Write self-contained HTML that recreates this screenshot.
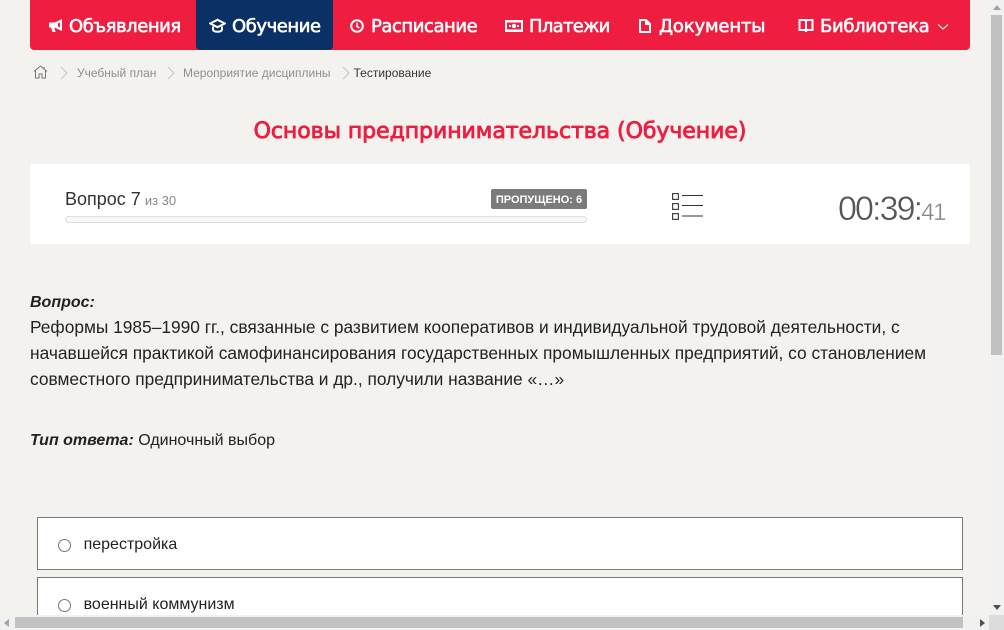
<!DOCTYPE html>
<html lang="ru"><head><meta charset="utf-8"><title>Тестирование</title>
<style>
html,body{margin:0;padding:0;width:1004px;height:630px;overflow:hidden;background:#f3f2ef;font-family:"Liberation Sans",sans-serif;color:#222}
#w{position:relative;width:1004px;height:630px;overflow:hidden}
.a{position:absolute;white-space:nowrap}
#nav{left:30px;top:0;width:940px;height:50px;background:#ef1d3f;border-radius:0 0 4px 4px}
#act{left:196px;top:0;width:137px;height:50px;background:#0a3066;border-radius:0 0 4px 4px}
.n{top:14px;line-height:26px;font-size:18px;font-family:"DejaVu Sans",sans-serif;font-weight:400;color:#fff;-webkit-text-stroke:.6px #fff;letter-spacing:-.45px}
.b{top:65px;line-height:16px;font-size:12px;color:#8f8f8f}
svg{position:absolute;display:block}
.q{left:30px;font-size:17.34px;line-height:26px;color:#222}
.opt{left:37px;width:924px;background:#fff;border:1px solid #7b7b7b}
.r{left:58px;width:11px;height:11px;border:1px solid #777;border-radius:50%;background:#fff}
.t{left:83.6px;font-size:16px;line-height:20px;color:#222}
</style></head><body><div id="w">
<div class="a" id="nav"></div><div class="a" id="act"></div>

<svg style="left:48px;top:18px" width="15" height="15" viewBox="0 0 15 15"><path d="M14 1 7 4.500H1V9.500H3L4.500 14H7.500L6.500 9.500 14 13ZM10 5.500 12 4.500V9.500L10 8.500Z" fill="#fff" fill-rule="evenodd"/></svg>
<div class="a n" style="left:69px">Объявления</div>
<svg style="left:209px;top:18px" width="17" height="16" viewBox="0 0 17 16"><path d="M8.500 1.800 15.800 5.500 8.500 9.200 1.200 5.500Z" fill="none" stroke="#fff" stroke-width="2"/><path d="M4 8.500V11.500C4 14.500 13 14.500 13 11.500V8.500" fill="none" stroke="#fff" stroke-width="2"/></svg>
<div class="a n" style="left:232px">Обучение</div>
<svg style="left:350px;top:19px" width="14" height="14" viewBox="0 0 14 14"><circle cx="7" cy="7" r="5.800" fill="none" stroke="#fff" stroke-width="2"/><path d="M7 3.800V7.400L9.300 9" fill="none" stroke="#fff" stroke-width="1.500"/></svg>
<div class="a n" style="left:371px">Расписание</div>
<svg style="left:505px;top:20px" width="18" height="12" viewBox="0 0 18 12"><path d="M0 0H18V12H0ZM2 2.500V9.500H16V2.500Z" fill="#fff" fill-rule="evenodd"/><circle cx="9" cy="6" r="2.200" fill="#fff"/><rect x="4" y="5" width="2" height="2" fill="#fff"/><rect x="12" y="5" width="2" height="2" fill="#fff"/></svg>
<div class="a n" style="left:529px;letter-spacing:-.7px">Платежи</div>
<svg style="left:639px;top:19px" width="12" height="14" viewBox="0 0 12 14"><path d="M0 0H7.500L12 4.500V14H0ZM2 2V12H10V6H6V2Z" fill="#fff" fill-rule="evenodd"/></svg>
<div class="a n" style="left:659px;letter-spacing:-.15px">Документы</div>
<svg style="left:798px;top:19px" width="16" height="14" viewBox="0 0 16 14"><path d="M1.500 1H6.500C7.500 1 8 1.500 8 2.500V13C8 12 7.500 11 6.500 11H1.500ZM14.500 1H9.500C8.500 1 8 1.500 8 2.500V13C8 12 8.500 11 9.500 11H14.500Z" fill="none" stroke="#fff" stroke-width="2"/></svg>
<div class="a n" style="left:820px;letter-spacing:-.35px">Библиотека</div>
<svg style="left:937px;top:23px" width="12" height="8" viewBox="0 0 12 8"><path d="M1 1.500 6 6 11 1.500" fill="none" stroke="#fff" stroke-width="1.100"/></svg>

<svg style="left:33px;top:65px" width="15" height="14" viewBox="0 0 15 14"><path d="M1 6.500 7.500 1 14 6.500M2.500 5.500V13H6V9H9V13H12.500V5.500M11 2V4" fill="none" stroke="#777" stroke-width="1"/></svg>
<svg style="left:60px;top:66px" width="8" height="14" viewBox="0 0 8 14"><path d="M1 1 7 7 1 13" fill="none" stroke="#c4c4c4" stroke-width="1"/></svg>
<div class="a b" style="left:77px">Учебный план</div>
<svg style="left:167px;top:66px" width="8" height="14" viewBox="0 0 8 14"><path d="M1 1 7 7 1 13" fill="none" stroke="#c4c4c4" stroke-width="1"/></svg>
<div class="a b" style="left:183px">Мероприятие дисциплины</div>
<svg style="left:342px;top:66px" width="8" height="14" viewBox="0 0 8 14"><path d="M1 1 7 7 1 13" fill="none" stroke="#c4c4c4" stroke-width="1"/></svg>
<div class="a b" style="left:353.500px;color:#333">Тестирование</div>

<div class="a" style="left:30px;width:940px;top:117px;text-align:center;font-family:'DejaVu Sans',sans-serif;font-size:22px;line-height:30px;color:#ef1d3f;-webkit-text-stroke:.85px #ef1d3f;letter-spacing:-.05px">Основы предпринимательства (Обучение)</div>

<div class="a" style="left:30px;top:164px;width:940px;height:80px;background:#fff"></div>
<div class="a" style="left:65px;top:187px;font-size:18px;line-height:24px;color:#333">Вопрос 7 <span style="font-size:13px;color:#888;margin-left:-1px">из 30</span></div>
<div class="a" style="left:491px;top:189px;width:96px;height:20px;background:#7b7b7b;border-radius:2px;color:#fff;font-size:11px;font-weight:700;line-height:22px;text-align:center">ПРОПУЩЕНО: 6</div>
<div class="a" style="left:65px;top:216px;width:520px;height:5px;border:1px solid #dedede;border-radius:4px;background:#f8f8f8"></div>

<svg style="left:672px;top:192px" width="32" height="29" viewBox="0 0 32 29"><g fill="none" stroke="#444" stroke-width="1.200"><rect x=".6" y="1.600" width="5.800" height="5.800"/><rect x=".6" y="11.600" width="5.800" height="5.800"/><rect x=".6" y="21.600" width="5.800" height="5.800"/></g><path d="M10 3.500H31M10 13.500H31M10 24H31" fill="none" stroke="#333" stroke-width="1"/></svg>
<div class="a" style="left:838px;top:189px;font-size:34px;line-height:40px;color:#555;font-weight:400;letter-spacing:-1.9px;-webkit-text-stroke:.45px #fff">00:39:<span style="font-size:24px;color:#888;letter-spacing:-1.400px;-webkit-text-stroke:.3px #fff">41</span></div>

<div class="a q" style="top:290px;font-style:italic;font-weight:700;font-size:16px">Вопрос:</div>
<div class="a q" style="top:314px">Реформы 1985–1990 гг., связанные с развитием кооперативов и индивидуальной трудовой деятельности, с</div>
<div class="a q" style="top:340px">начавшейся практикой самофинансирования государственных промышленных предприятий, со становлением</div>
<div class="a q" style="top:366px">совместного предпринимательства и др., получили название «…»</div>
<div class="a q" style="top:428px;font-size:16px"><b><i>Тип ответа:</i></b> Одиночный выбор</div>

<div class="a opt" style="top:517px;height:51px"></div>
<div class="a r" style="top:539px"></div>
<div class="a t" style="top:535px">перестройка</div>
<div class="a opt" style="top:577px;border-bottom:0;height:53px"></div>
<div class="a r" style="top:599px"></div>
<div class="a t" style="top:595px">военный коммунизм</div>

<div class="a" style="left:989px;top:0;width:15px;height:615px;background:#f1f1f1"></div>
<div class="a" style="left:991px;top:15px;width:11px;height:340px;background:#c1c1c1"></div>
<div class="a" style="left:0;top:615px;width:989px;height:15px;background:#f1f1f1"></div>
<div class="a" style="left:15px;top:617px;width:948px;height:11px;background:#c1c1c1"></div>
<div class="a" style="left:989px;top:615px;width:15px;height:15px;background:#dcdcdc"></div>
<svg style="left:993px;top:5px" width="8" height="5" viewBox="0 0 8 5"><path d="M4 0 8 5H0Z" fill="#a3a3a3"/></svg>
<svg style="left:993px;top:605px" width="8" height="5" viewBox="0 0 8 5"><path d="M0 0H8L4 5Z" fill="#505050"/></svg>
<svg style="left:4px;top:619px" width="5" height="8" viewBox="0 0 5 8"><path d="M5 0V8L0 4Z" fill="#a3a3a3"/></svg>
<svg style="left:980px;top:619px" width="5" height="8" viewBox="0 0 5 8"><path d="M0 0V8L5 4Z" fill="#505050"/></svg>
</div></body></html>
